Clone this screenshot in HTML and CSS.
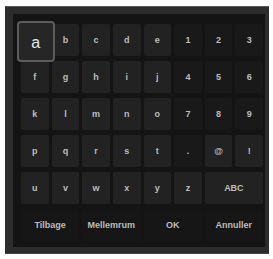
FILE: index.html
```html
<!DOCTYPE html>
<html lang="da">
  <head>
    <meta charset="UTF-8" />
    <title>Tastatur</title>
    <link rel="stylesheet" href="styles.css">
  </head>
  <body>
    <div class="panel">
      <div class="board">
        <div class="key focus">a</div>
        <div class="key">b</div>
        <div class="key">c</div>
        <div class="key">d</div>
        <div class="key">e</div>
        <div class="key num">1</div>
        <div class="key num">2</div>
        <div class="key num">3</div>

        <div class="key">f</div>
        <div class="key">g</div>
        <div class="key">h</div>
        <div class="key">i</div>
        <div class="key">j</div>
        <div class="key num">4</div>
        <div class="key num">5</div>
        <div class="key num">6</div>

        <div class="key">k</div>
        <div class="key">l</div>
        <div class="key">m</div>
        <div class="key">n</div>
        <div class="key">o</div>
        <div class="key num">7</div>
        <div class="key num">8</div>
        <div class="key num">9</div>

        <div class="key">p</div>
        <div class="key">q</div>
        <div class="key">r</div>
        <div class="key">s</div>
        <div class="key">t</div>
        <div class="key num">.</div>
        <div class="key">@</div>
        <div class="key">!</div>

        <div class="key">u</div>
        <div class="key">v</div>
        <div class="key">w</div>
        <div class="key">x</div>
        <div class="key">y</div>
        <div class="key">z</div>
        <div class="key wide">ABC</div>

        <div class="key cmd">Tilbage</div>
        <div class="key cmd">Mellemrum</div>
        <div class="key cmd">OK</div>
        <div class="key cmd">Annuller</div>
      </div>
    </div>
  </body>
</html>
```

FILE: styles.css
```css
body {
  margin: 0;
  background: #fff;
  font-family: "Liberation Sans", Arial, sans-serif;
}
.panel {
  margin: 6px 0 0 5px;
  width: 264px;
  height: 248px;
  box-sizing: border-box;
  padding: 7px 4px 6px 8px;
  background: #2c2c2c;
  border-top: 1px solid #5a5a5a;
  border-bottom: 1px solid #444;
}
.board {
  height: 100%;
  box-sizing: border-box;
  padding: 10px 2px 0 8px;
  background: #141414;
  display: grid;
  grid-template-columns: repeat(8, 1fr);
  grid-template-rows: repeat(6, 32px);
  gap: 5px 3px;
}
.key {
  display: flex;
  align-items: center;
  justify-content: center;
  background: #222;
  border-radius: 2px;
  color: #bcbcbc;
  font-size: 9px;
  font-weight: bold;
}
.key.num {
  background: #191919;
}
.key.wide {
  grid-column: span 2;
}
.key.cmd {
  grid-column: span 2;
  background: #161616;
}
.key.focus {
  position: relative;
  z-index: 1;
  margin: -3px -6px -6px -4px;
  padding-top: 3px;
  background: #262626;
  border: 2px solid #5c5c5c;
  border-radius: 4px;
  color: #e8e8e8;
  font-size: 16px;
  font-weight: normal;
}
```
